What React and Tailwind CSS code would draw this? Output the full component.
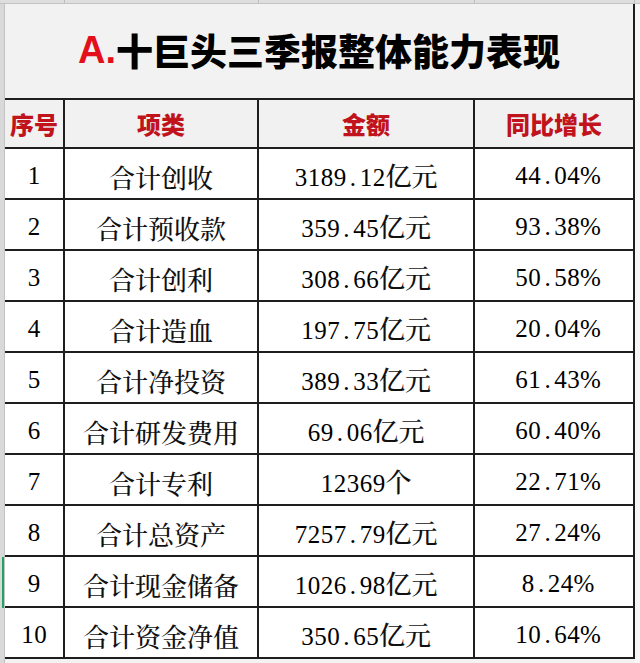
import React from "react";

const rows = [
  ["1", "合计创收", "3189.12亿元", "44.04%"],
  ["2", "合计预收款", "359.45亿元", "93.38%"],
  ["3", "合计创利", "308.66亿元", "50.58%"],
  ["4", "合计造血", "197.75亿元", "20.04%"],
  ["5", "合计净投资", "389.33亿元", "61.43%"],
  ["6", "合计研发费用", "69.06亿元", "60.40%"],
  ["7", "合计专利", "12369个", "22.71%"],
  ["8", "合计总资产", "7257.79亿元", "27.24%"],
  ["9", "合计现金储备", "1026.98亿元", "8.24%"],
  ["10", "合计资金净值", "350.65亿元", "10.64%"],
];

function Mixed({ text }) {
  return (
    <span className="inline-flex items-baseline whitespace-nowrap">
      {Array.from(text).map((ch, i) =>
        ch.charCodeAt(0) < 128 ? (
          <span
            key={i}
            className="inline-block w-[13px] text-center font-['Liberation_Serif',serif] text-[25px] text-black"
          >
            {ch}
          </span>
        ) : (
          <span key={i} className="font-medium">{ch}</span>
        )
      )}
    </span>
  );
}

const serif =
  "font-['Noto_Serif_CJK_SC','Source_Han_Serif_SC','AR_PL_UMing_CN','Noto_Sans_CJK_SC',serif]";

export default function App() {
  return (
    <div className="w-[640px] h-[663px] bg-[#f3f3f3] overflow-hidden flex flex-col">
      <div className="h-[4px] shrink-0 bg-[#dedede] border-b border-[#c4c4c4] flex">
        <div className="w-[65px] border-r border-[#bdbdbd]" />
        <div className="w-[194px] border-r border-[#bdbdbd]" />
        <div className="w-[216px] border-r border-[#bdbdbd]" />
        <div className="w-[160px] border-r border-[#bdbdbd]" />
      </div>
      <div className="flex flex-1">
        <div className="w-[5px] shrink-0 bg-[#d9d9d9] border-r border-[#c3c3c3] flex flex-col">
          <div className="h-[553px]" />
          <div className="h-[51px] bg-[#21a366] w-[2px] ml-auto" />
        </div>
        <div className="w-[630px] shrink-0 flex flex-col">
          <div className="h-[94px] bg-[#f2f2f2] border-r-2 border-[#1e1e1e] flex items-center justify-center pb-[2px]">
            <span className="font-['Liberation_Sans',sans-serif] font-bold text-[38px] text-[#e3101b] leading-none">
              A.
            </span>
            <span className="font-['Noto_Sans_CJK_SC',sans-serif] font-black text-[37px] text-black leading-none">
              十巨头三季报整体能力表现
            </span>
          </div>
          <div className="grid grid-cols-[60px_194px_216px_160px] border-t-2 border-[#1e1e1e] bg-[#f1f1f1] h-[51px]">
            {["序号", "项类", "金额", "同比增长"].map((h, i) => (
              <div
                key={i}
                className="border-r-2 border-b-2 border-[#1e1e1e] flex items-center justify-center font-['Noto_Sans_CJK_SC',sans-serif] font-black text-[24px] text-[#c0131b]"
              >
                {h}
              </div>
            ))}
          </div>
          {rows.map((r, ri) => (
            <div
              key={ri}
              className="grid grid-cols-[60px_194px_216px_160px] bg-white h-[51px]"
            >
              {r.map((c, ci) => (
                <div
                  key={ci}
                  className={`border-r-2 border-b-2 border-[#1e1e1e] flex items-center justify-center pt-[5px] text-[26px] text-[#111] ${serif}`}
                >
                  <Mixed text={c} />
                </div>
              ))}
            </div>
          ))}
        </div>
        <div className="flex-1 bg-[#f7f7f7]" />
      </div>
    </div>
  );
}
